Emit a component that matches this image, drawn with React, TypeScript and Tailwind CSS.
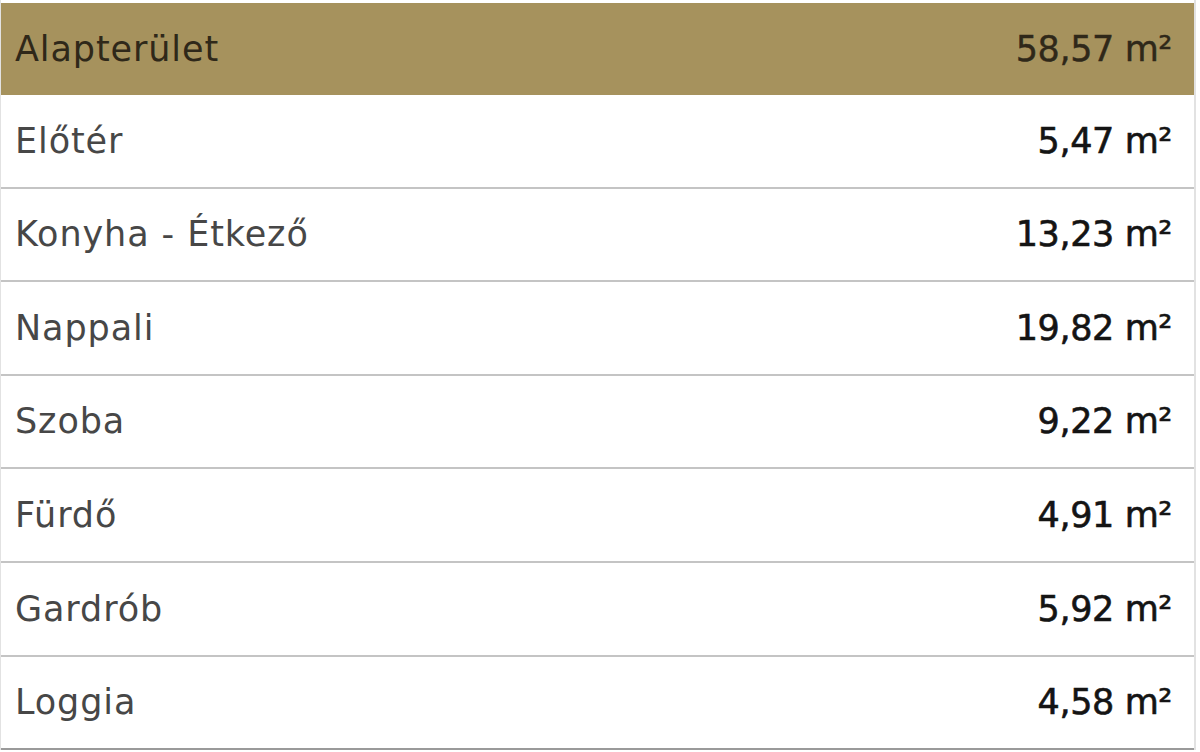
const rows = [
  { name: 'Előtér', area: '5,47' },
  { name: 'Konyha - Étkező', area: '13,23' },
  { name: 'Nappali', area: '19,82' },
  { name: 'Szoba', area: '9,22' },
  { name: 'Fürdő', area: '4,91' },
  { name: 'Gardrób', area: '5,92' },
  { name: 'Loggia', area: '4,58' },
]

export default function App() {
  return (
    <div className="w-[1200px] h-[752px] bg-white overflow-hidden font-['DejaVu_Sans',sans-serif]">
      <div className="w-[1196px] pt-[3px] border-l border-r-2 border-[#e2e2e2]">
        <div className="h-[92px] flex items-center justify-between pl-[14px] pr-[22px] bg-[#a6925d] text-[#2f2819] text-[35px] tracking-[0.9px]">
          <span>Alapterület</span>
          <span className="tracking-[-0.4px] [-webkit-text-stroke:0.4px_#2f2819]">58,57 m²</span>
        </div>
        {rows.map((r) => (
          <div
            key={r.name}
            className="h-[93.6px] flex items-center justify-between pl-[14px] pr-[22px] border-b-2 border-[#c4c4c4] last:border-[#9a9a9a] text-[35px] tracking-[0.9px]"
          >
            <span className="text-[#474747]">{r.name}</span>
            <span className="text-[#141414] tracking-[-0.4px] [-webkit-text-stroke:0.6px_#141414]">{r.area} m²</span>
          </div>
        ))}
      </div>
    </div>
  )
}
